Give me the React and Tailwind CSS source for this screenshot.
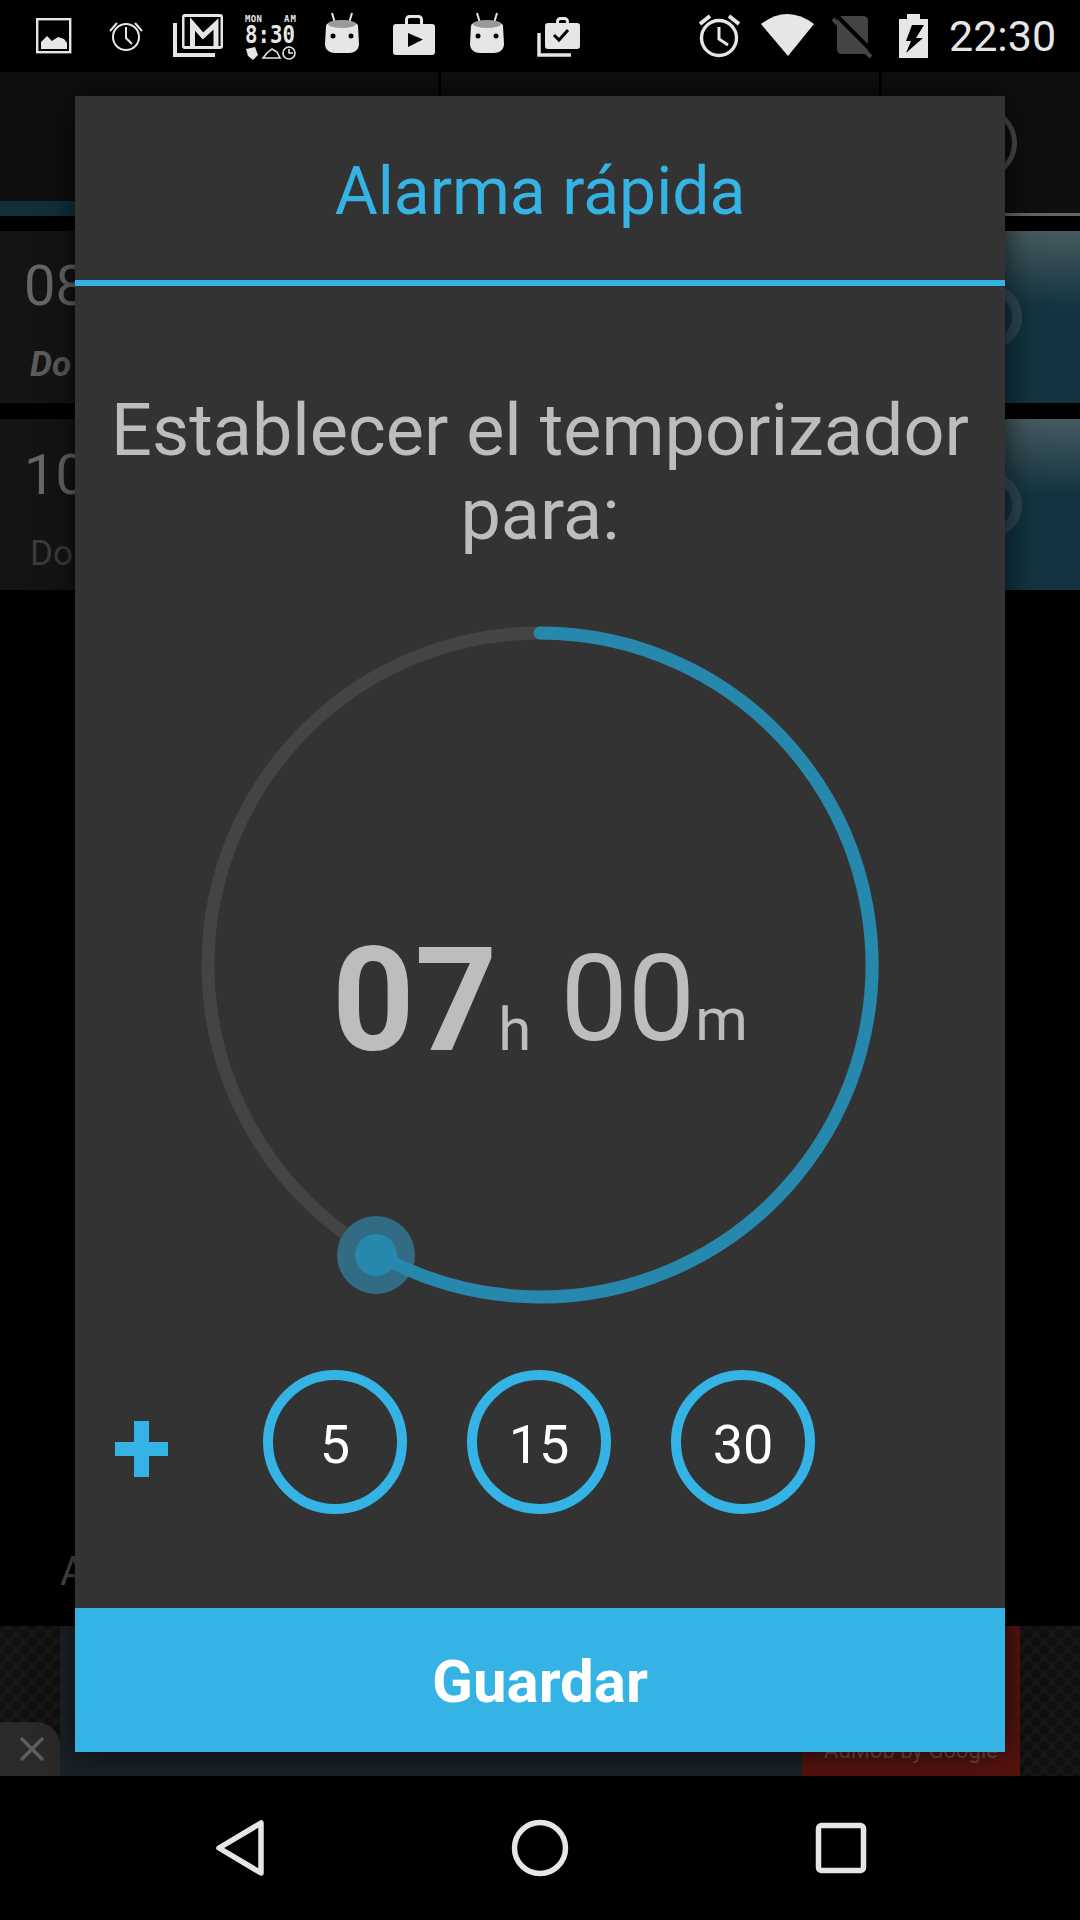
const C = "#e6e6e6";
const B = "#34b3e4";

function Ico({ w, className = "", children }) {
  return (
    <svg width={w} height="72" viewBox={`0 0 ${w} 72`} className={`block shrink-0 overflow-visible ${className}`}>
      {children}
    </svg>
  );
}

function Droid({ className }) {
  return (
    <Ico w={34} className={className}>
      <line x1="7" y1="13" x2="10" y2="23" stroke={C} strokeWidth="2" />
      <line x1="27" y1="13" x2="24" y2="23" stroke={C} strokeWidth="2" />
      <path d="M1 26 C1 19 33 19 33 26 L34 44 C34 50 29 53 24 53 L10 53 C5 53 0 50 0 44 Z" fill={C} />
      <ellipse cx="17" cy="24" rx="14" ry="4" fill="#9a9a9a" />
      <circle cx="8" cy="36" r="2.5" fill="#000" />
      <circle cx="26" cy="36" r="2.5" fill="#000" />
    </Ico>
  );
}

function StatusBar() {
  return (
    <div className="h-[72px] shrink-0 bg-black flex items-center">
      <Ico w={36} className="ml-[36px]">
        <rect x="1.2" y="19.2" width="33" height="33" fill="none" stroke={C} strokeWidth="2.4" />
        <polygon points="5,49 5,42 11,36 16,41 22,37 28,39 31,43 31,49" fill={C} />
      </Ico>
      <Ico w={34} className="ml-[37px]">
        <circle cx="17" cy="37" r="13" fill="none" stroke={C} strokeWidth="2" />
        <path d="M1 31 L8 23 M26 23 L33 31" stroke={C} strokeWidth="2" />
        <path d="M17 27 L17 38 L23 44" fill="none" stroke={C} strokeWidth="2" />
      </Ico>
      <Ico w={50} className="ml-[30px]">
        <path d="M2 23 L2 55 L42 55" fill="none" stroke={C} strokeWidth="4" />
        <rect x="9" y="14" width="41" height="35" rx="3" fill={C} />
        <rect x="11.5" y="17" width="36" height="29" fill="#000" />
        <path d="M19.5 46 L19.5 24 L30 36 L43 24 L43 46" fill="none" stroke={C} strokeWidth="5" />
      </Ico>
      <Ico w={51} className="ml-[22px]">
        <text x="0" y="22" fontSize="9" fontWeight="700" fill={C} fontFamily="'DejaVu Sans Mono',monospace" textLength="17">MON</text>
        <text x="39" y="22" fontSize="9" fontWeight="700" fill={C} fontFamily="'DejaVu Sans Mono',monospace" textLength="12">AM</text>
        <text x="0" y="43" fontSize="25" fontWeight="700" fill={C} fontFamily="'DejaVu Sans Mono',monospace" textLength="50" lengthAdjust="spacingAndGlyphs">8:30</text>
        <path d="M1 49 L10 47 L13 55 L8 60 L3 56 Z" fill={C} />
        <path d="M18 58 L22 53 L27 49 L32 52 L35 58 Z" fill="none" stroke={C} strokeWidth="1.6" />
        <circle cx="44" cy="53" r="6" fill="none" stroke={C} strokeWidth="1.6" />
        <path d="M44 49 L44 53 L48 53" fill="none" stroke={C} strokeWidth="1.6" />
      </Ico>
      <Droid className="ml-[29px]" />
      <Ico w={42} className="ml-[34px]">
        <rect x="13.5" y="16.5" width="15" height="12" rx="3" fill="none" stroke={C} strokeWidth="3" />
        <rect x="0" y="24" width="42" height="31" rx="3" fill={C} />
        <polygon points="15,33 30,39.5 15,47" fill="#000" />
      </Ico>
      <Droid className="ml-[35px]" />
      <Ico w={43} className="ml-[33px]">
        <path d="M2 33 L2 55 L34 55" fill="none" stroke={C} strokeWidth="3.5" />
        <rect x="20.5" y="18.5" width="10" height="9" rx="3" fill="none" stroke={C} strokeWidth="3" />
        <rect x="8" y="23" width="35" height="26" rx="3" fill={C} />
        <path d="M17 35 L22 40 L31 30" fill="none" stroke="#000" strokeWidth="3" />
      </Ico>

      <Ico w={43} className="ml-[118px]">
        <circle cx="21" cy="38" r="17.5" fill="none" stroke={C} strokeWidth="3.4" />
        <path d="M2 24 L12 16 M31 16 L41 24" stroke={C} strokeWidth="4" />
        <path d="M21 27 L21 39 L30 45" fill="none" stroke={C} strokeWidth="3" />
      </Ico>
      <Ico w={53} className="ml-[20px]">
        <path d="M27 56 L0 24 Q26.500 4 53 24 Z" fill={C} />
      </Ico>
      <Ico w={40} className="ml-[18px]">
        <path d="M5 21 Q5 16 10 16 L31 16 Q36 16 36 21 L36 54 L10 54 Q5 54 5 49 Z" fill="#444" />
        <line x1="4" y1="15" x2="42" y2="53" stroke="#000" strokeWidth="4" />
        <line x1="1" y1="19" x2="39" y2="57" stroke="#444" strokeWidth="4" />
      </Ico>
      <Ico w={29} className="ml-[27px]">
        <rect x="8" y="14" width="13" height="6" fill={C} />
        <rect x="0" y="19" width="29" height="39" fill={C} />
        <polygon points="13,25 25,25 17,38 24,38 7,53 12,41 7,41" fill="#000" />
      </Ico>
      <span className="ml-[21px] text-[43px] leading-none text-[#e6e6e6]">22:30</span>
    </div>
  );
}

function Tabs() {
  return (
    <div className="h-[144px] shrink-0 flex gap-[3px]">
      <div className="w-[438px] bg-[#0f0f0f] flex flex-col justify-end">
        <div className="h-[15px] bg-[#12303a]" />
      </div>
      <div className="w-[438px] bg-[#0f0f0f] flex flex-col justify-end">
        <div className="h-[3px] bg-[#666666]" />
      </div>
      <div className="flex-1 bg-[#0f0f0f] flex flex-col">
        <div className="flex-1 flex items-center justify-center">
          <div className="w-[72px] h-[72px] rounded-full border-[5px] border-[#4a4a4a]" />
        </div>
        <div className="h-[3px] bg-[#666666]" />
      </div>
    </div>
  );
}

function Card({ h, time, day, dayClass, timeClass }) {
  return (
    <div className="shrink-0 flex" style={{ height: h }}>
      <div className="flex-1 bg-[#141414] pl-[24px] flex flex-col">
        <div className={`text-[56px] leading-[66px] text-[#666666] ${timeClass}`}>{time}</div>
        <div className={`ml-[6px] mt-[25px] text-[35px] leading-[42px] ${dayClass}`}>{day}</div>
      </div>
      <div className="w-[198px] flex items-center justify-end pr-[58px] bg-[linear-gradient(180deg,#465a60_0%,#12333f_45%,#12333f_100%)]">
        <div className="w-[66px] h-[66px] rounded-full border-[10px] border-white/10" />
      </div>
    </div>
  );
}

const pattern =
  "bg-[#181818] bg-[radial-gradient(circle,#101010_4px,transparent_6px),radial-gradient(circle,#101010_4px,transparent_6px)] bg-[length:16px_16px] bg-[position:0_0,8px_8px]";

function AdBar() {
  return (
    <div className="h-[150px] shrink-0 flex">
      <div className={`w-[60px] flex flex-col justify-end ${pattern}`}>
        <div className="h-[54px] bg-[#2a2a2a] rounded-tr-[24px] flex items-center justify-center pl-[3px]">
          <svg width="26" height="26" viewBox="0 0 26 26">
            <path d="M2 2 L24 24 M24 2 L2 24" stroke="#5e5e5e" strokeWidth="3.500" />
          </svg>
        </div>
      </div>
      <div className="w-[742px] bg-[#1a2227]" />
      <div className="w-[218px] bg-[#55130f] flex flex-col justify-end items-center pb-[10px]">
        <span className="text-[22px] leading-[30px] whitespace-nowrap text-[#6e4c4a]">AdMob by Google</span>
      </div>
      <div className={`flex-1 ${pattern}`} />
    </div>
  );
}

function NavBar() {
  return (
    <div className="h-[144px] shrink-0 bg-black flex items-center">
      <svg width="52" height="60" viewBox="0 0 52 60" className="ml-[214px] block">
        <path d="M47 5 L47 55 L5 30 Z" fill="none" stroke={C} strokeWidth="5.500" strokeLinejoin="round" />
      </svg>
      <svg width="60" height="60" viewBox="0 0 60 60" className="ml-[244px] block">
        <circle cx="30" cy="30" r="25.500" fill="none" stroke={C} strokeWidth="5.500" />
      </svg>
      <svg width="54" height="54" viewBox="0 0 54 54" className="ml-[244px] block">
        <rect x="4.500" y="4.500" width="45" height="45" rx="3" fill="none" stroke={C} strokeWidth="5.500" />
      </svg>
    </div>
  );
}

function Dial() {
  return (
    <div className="relative h-[700px] mt-[58px] pt-[72px] flex items-center justify-center shrink-0">
      <svg width="700" height="700" viewBox="0 0 700 700" className="absolute left-[115px] top-0">
        <circle cx="350" cy="350" r="332" fill="none" stroke="#444444" strokeWidth="13" />
        <circle cx="186" cy="640" r="39" fill="#326b84" />
        <circle cx="186" cy="640" r="21" fill="#2688ad" />
        <path d="M350 18 A332 332 0 1 1 184 637.500" fill="none" stroke="#2688ad" strokeWidth="13" strokeLinecap="round" />
      </svg>
      <div className="relative flex items-end text-[#bdbdbd]">
        <div className="flex items-baseline">
          <span className="text-[144px] leading-[144px] font-bold">07</span>
          <span className="text-[60px] leading-[60px] ml-[1px]">h</span>
        </div>
        <div className="flex items-baseline ml-[29px] mb-[14px]">
          <span className="text-[120px] leading-[120px]">00</span>
          <span className="text-[60px] leading-[60px]">m</span>
        </div>
      </div>
    </div>
  );
}

function Quick({ n }) {
  return (
    <div className="w-[144px] h-[144px] rounded-full border-[10px] border-[#34b3e4] pt-[5px] flex items-center justify-center text-[54px] text-white">
      {n}
    </div>
  );
}

function Modal() {
  return (
    <div className="absolute left-[75px] top-[96px] w-[930px] h-[1656px] bg-[#333333] flex flex-col shadow-[0_0_30px_rgba(0,0,0,0.7)]">
      <div className="h-[184px] pt-[6px] shrink-0 flex items-center justify-center text-[66px] text-[#34b3e4]">Alarma rápida</div>
      <div className="h-[6px] shrink-0 bg-[#34b3e4]" />
      <div className="mt-[103px] text-center text-[72px] leading-[84px] text-[#bdbdbd]">
        Establecer el temporizador
        <br />
        para:
      </div>
      <Dial />
      <div className="mt-[55px] flex items-center pl-[40px]">
        <svg width="53" height="56" viewBox="0 0 53 56" className="block mt-[14px] mr-[95px]">
          <rect x="0" y="21" width="53" height="14" fill={B} />
          <rect x="19" y="0" width="15" height="56" fill={B} />
        </svg>
        <div className="flex gap-[60px]">
          <Quick n="5" />
          <Quick n="15" />
          <Quick n="30" />
        </div>
      </div>
      <div className="mt-auto h-[144px] pt-[3px] bg-[#34b3e4] flex items-center justify-center text-[60px] font-bold text-white">
        Guardar
      </div>
    </div>
  );
}

export default function App() {
  return (
    <div className="relative w-[1080px] h-[1920px] bg-black overflow-hidden flex flex-col font-['Roboto',sans-serif]">
      <StatusBar />
      <Tabs />
      <div className="h-[15px] shrink-0" />
      <Card h={172} time="08:00" day="Do" dayClass="font-bold italic text-[#5c5c5c]" timeClass="mt-[22px]" />
      <div className="h-[16px] shrink-0" />
      <Card h={171} time="10:00" day="Do" dayClass="text-[#3c3c3c]" timeClass="mt-[23px]" />
      <div className="flex-1 flex flex-col justify-end pl-[60px] pb-[31px]">
        <span className="text-[40px] leading-[47px] text-[#4a4a4a]">A</span>
      </div>
      <AdBar />
      <NavBar />
      <Modal />
    </div>
  );
}
